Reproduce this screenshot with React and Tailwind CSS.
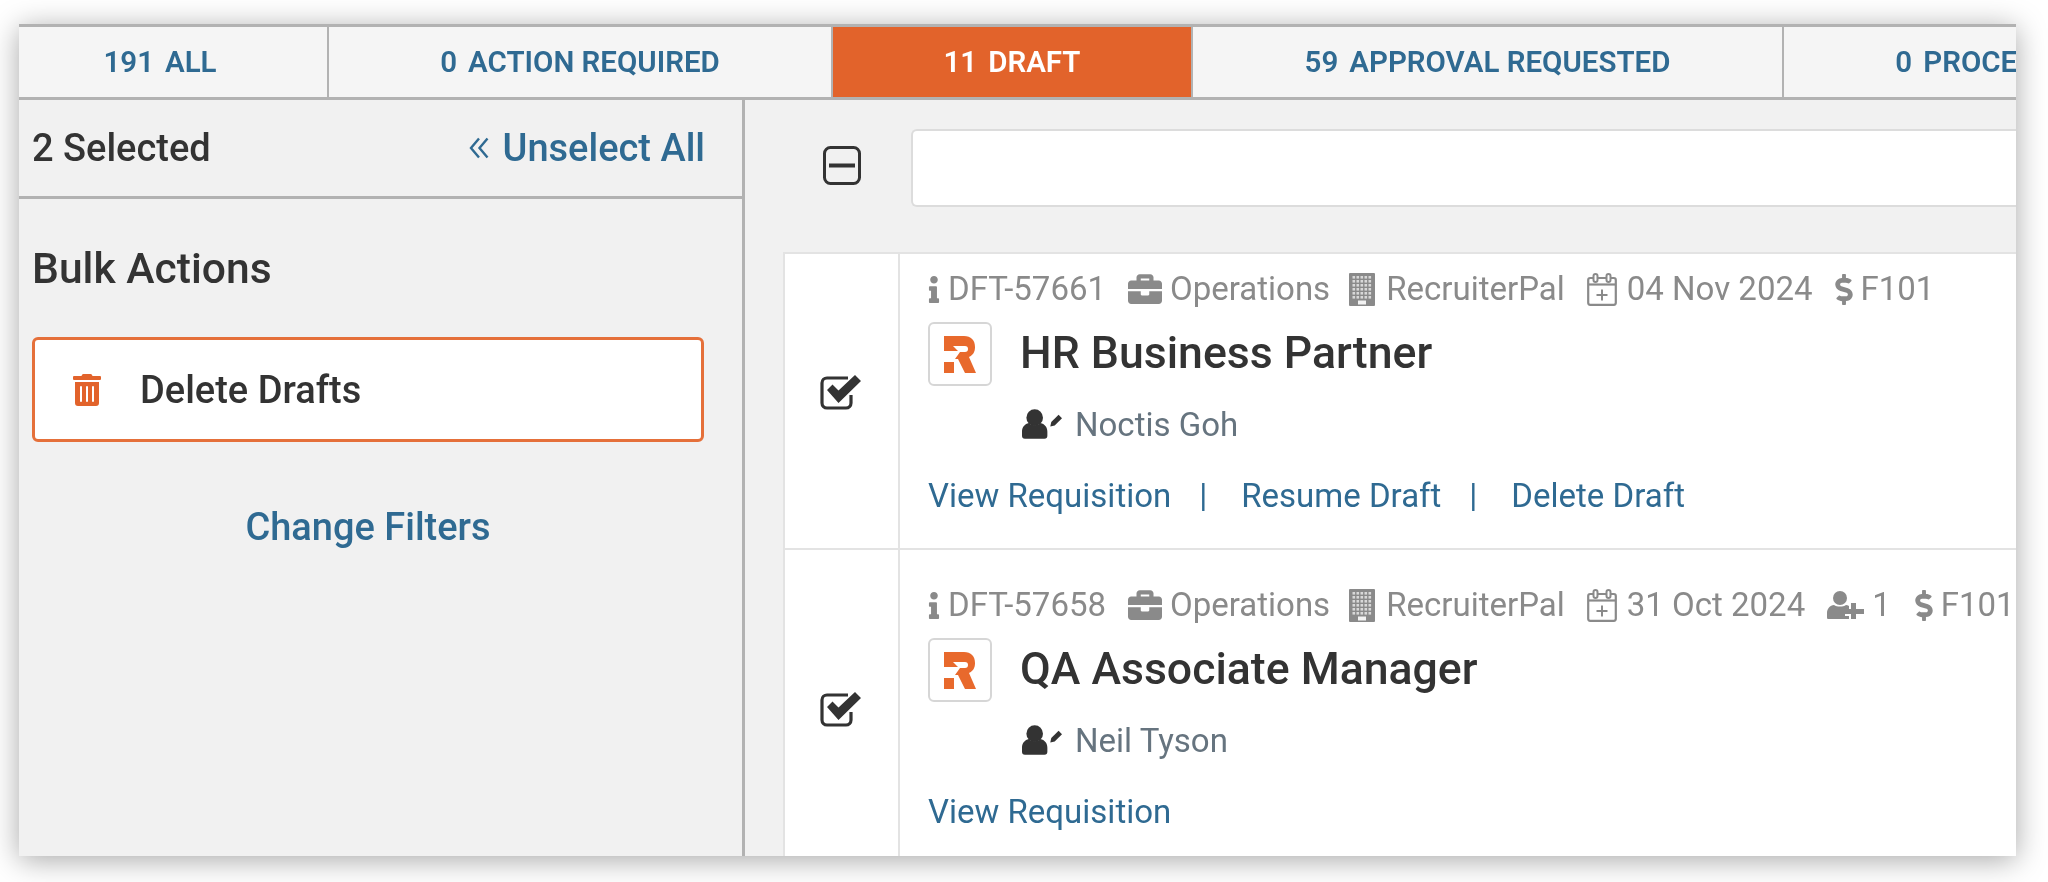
import { FaInfo, FaBriefcase, FaDollarSign, FaTrashAlt } from "react-icons/fa";

const tabs = [
    { count: 191, label: "ALL", width: "w-[310px]", inset: "pr-[26px]" },
    { count: 0, label: "ACTION REQUIRED", width: "w-[504px]" },
    { count: 11, label: "DRAFT", width: "w-[360px]", active: true },
    { count: 59, label: "APPROVAL REQUESTED", width: "w-[591px]" },
    { count: 0, label: "PROCESSING", width: "w-[432px]" },
];

function CheckedBox() {
    return (
        <svg viewBox="0 0 41 35" className="w-[41px] h-[35px]" fill="none">
            <path d="M31 20v8a5 5 0 0 1-5 5H7a5 5 0 0 1-5-5V8a5 5 0 0 1 5-5h21" stroke="#333" strokeWidth="3.2" />
            <path d="M7 15l5.5-5.5 6 6L35 0l6 6-22.500 22z" fill="#333" />
        </svg>
    );
}

function MinusBox() {
    return (
        <svg viewBox="0 0 38 39" className="w-[38px] h-[39px] mt-[17px] shrink-0" fill="none">
            <rect x="1.500" y="1.500" width="35" height="36" rx="6" stroke="#333" strokeWidth="3" />
            <rect x="6" y="17.500" width="26" height="4" fill="#333" />
        </svg>
    );
}

// 5 x 6 window grid, like the old font-awesome building glyph
const windows = [];
for (let row = 0; row < 6; row++) {
    for (let col = 0; col < 5; col++) {
        windows.push([3.5 + col * 4, 3 + row * 4]);
    }
}

function Building() {
    return (
        <svg viewBox="0 0 26 33" className="w-[26px] h-[33px] shrink-0">
            <rect width="26" height="33" rx="1" fill="#8a8a8a" />
            {windows.map(([x, y]) => (
                <rect key={`${x}-${y}`} x={x} y={y} width="2.600" height="2.600" fill="#d8d8d8" />
            ))}
            <rect x="9" y="27.500" width="8" height="4" fill="#f2f2f2" />
        </svg>
    );
}

function CalendarPlus() {
    return (
        <svg viewBox="0 0 30 33" className="w-[30px] h-[33px] shrink-0" fill="none" stroke="#8a8a8a">
            <rect x="1.200" y="5" width="27.600" height="26.800" rx="2" strokeWidth="2.200" />
            <path d="M1 11.500h28" strokeWidth="2.200" />
            <rect x="6.500" y="1" width="4" height="8" rx="2" fill="#fff" strokeWidth="2" />
            <rect x="19.500" y="1" width="4" height="8" rx="2" fill="#fff" strokeWidth="2" />
            <path d="M15 16.500v11M9.500 22h11" strokeWidth="2" />
        </svg>
    );
}

function UserPlus() {
    return (
        <svg viewBox="0 0 37 28" className="w-[37px] h-[28px] shrink-0" fill="#8a8a8a">
            <circle cx="13" cy="7" r="7" />
            <path d="M1 28c-1 0-1-1-1-2v-4c0-4 3-8 7-8 3 2 9 2 12 0 1 0 2 .5 3 1v3h-4v7h4v3z" />
            <path d="M24 12h5v6h8v5h-8v5h-5v-5h-7v-5h7z" />
        </svg>
    );
}

function OwnerIcon() {
    return (
        <svg viewBox="0 0 41 30" className="w-[40px] h-[30px] shrink-0" fill="#333">
            <circle cx="13" cy="8.500" r="8.500" />
            <path d="M3 30c-2 0-3-1-3-3v-4c0-5 3-8 7-9 3 3 9 3 12 0 4 1 7 4 7 9v4c0 2-1 3-3 3z" />
            <path d="M30 13l7.500-7.500 3.500 3.500-7.500 7.500-4.500 1z" />
        </svg>
    );
}

function Logo() {
    return (
        <div className="w-[64px] h-[64px] shrink-0 rounded-md border-2 border-[#d6d6d6] bg-white flex items-center justify-center">
            <svg viewBox="0 0 32 37" className="w-[32px] h-[37px]" fill="#e8692c">
                <path d="M0 0h20c7 0 11 4 11 11 0 5-2 8-6 10l7 16H21l-7-14h-3l5-7h5c2 0 3-1 3-3s-1-3-3-3H9l5 5H0z" />
                <path d="M0 26h10v11H0z" />
            </svg>
        </div>
    );
}

function Meta({ icon, children, gap = "gap-[8px]", className = "" }) {
    return (
        <span className={`flex items-center ${gap} ${className}`}>
            {icon}
            <span>{children}</span>
        </span>
    );
}

function RequisitionCard({ id, date, title, owner, referrals, actions, className = "", bodyClass = "", checkClass = "" }) {
    return (
        <div className={`flex bg-white border-l-2 border-[#e3e3e3] ${className}`}>
            <div className={`w-[115px] shrink-0 flex items-center justify-center border-r-2 border-[#e3e3e3] pr-[3px] ${checkClass}`}>
                <CheckedBox />
            </div>
            <div className={`flex-1 pl-[28px] min-w-0 ${bodyClass}`}>
                <div className="flex items-center h-[36px] text-[#8a8a8a] text-[33px] leading-[36px] whitespace-nowrap">
                    <Meta icon={<FaInfo className="w-[12px] h-[27px]" />} className="mr-[22px]">{id}</Meta>
                    <Meta icon={<FaBriefcase className="w-[34px] h-[34px]" />} className="mr-[19px]">Operations</Meta>
                    <Meta icon={<Building />} gap="gap-[11px]" className="mr-[22px]">RecruiterPal</Meta>
                    <Meta icon={<CalendarPlus />} gap="gap-[10px]" className="mr-[22px]">{date}</Meta>
                    {referrals && <Meta icon={<UserPlus />} className="mr-[24px]">{referrals}</Meta>}
                    <Meta icon={<FaDollarSign className="w-[18px] h-[31px]" />}>F101</Meta>
                </div>
                <div className="flex items-center gap-[28px] mt-[15px] h-[64px]">
                    <Logo />
                    <h2 className="text-[#333] text-[44.600px] font-medium leading-none -mt-[1px]">{title}</h2>
                </div>
                <div className="flex items-center gap-[13px] ml-[94px] mt-[20px] h-[36px]">
                    <OwnerIcon />
                    <span className="text-[#66747f] text-[33px] leading-none">{owner}</span>
                </div>
                <div className="flex items-center mt-[37px] text-[#2f6a92] text-[33px] leading-none whitespace-nowrap">
                    {actions.map((action, i) => (
                        <span key={action} className="flex items-center">
                            {i > 0 && <span className="w-[70px] pl-[28px] text-left">|</span>}
                            {action}
                        </span>
                    ))}
                </div>
            </div>
        </div>
    );
}

export default function App() {
    return (
        <div className="w-[2048px] h-[882px] bg-white pl-[19px] pt-[24px] overflow-hidden font-['Roboto',sans-serif]">
            <div className="w-[1997px] h-[832px] flex flex-col overflow-hidden bg-[#f1f1f1] shadow-[0_4px_28px_rgba(0,0,0,0.35)] blur-[0.5px]">
                {/* Status tabs */}
                <div className="flex shrink-0 h-[76px] border-t-[3px] border-b-[3px] border-[#b2b2b2] bg-[#f5f5f5] whitespace-nowrap">
                    {tabs.map((tab) => (
                        <div
                            key={tab.label}
                            className={`${tab.width} ${tab.inset || ""} shrink-0 flex items-center justify-center gap-[11px] border-r-2 border-[#b2b2b2] text-[29.500px] font-semibold ${tab.active ? "bg-[#e2632b] text-white" : "text-[#2f6a92]"}`}
                        >
                            <span>{tab.count}</span>
                            <span>{tab.label}</span>
                        </div>
                    ))}
                </div>

                <div className="flex flex-1 min-h-0">
                    {/* Bulk actions sidebar */}
                    <div className="w-[726px] shrink-0 border-r-[3px] border-[#b2b2b2] text-[#333]">
                        <div className="h-[99px] flex items-center justify-between pl-[13px] pr-[37px] border-b-[3px] border-[#b2b2b2] font-medium text-[38px]">
                            <span>2 Selected</span>
                            <span className="flex items-center gap-[14px] text-[#2f6a92]">
                                <svg viewBox="0 0 20 22" className="w-[20px] h-[22px]" fill="none" stroke="#2f6a92" strokeWidth="2.400">
                                    <path d="M10 1.500L2 11l8 9.500M18.500 1.500L10.500 11l8 9.500" />
                                </svg>
                                Unselect All
                            </span>
                        </div>
                        <h3 className="pl-[13px] mt-[44px] text-[42.600px] font-medium leading-[50px]">Bulk Actions</h3>
                        <button className="flex items-center ml-[13px] mt-[44px] w-[672px] h-[105px] bg-white border-[3px] border-[#e5703a] rounded-md pl-[38px] gap-[39px] text-[38px] font-medium">
                            <FaTrashAlt className="w-[28px] h-[32px] text-[#e2632b]" />
                            <span className="pt-[2px]">Delete Drafts</span>
                        </button>
                        <div className="mt-[57px] w-[672px] ml-[13px] text-center text-[38px] font-medium text-[#2f6a92]">Change Filters</div>
                    </div>

                    {/* Requisition list */}
                    <div className="flex-1 min-w-0 flex flex-col pl-[38px]">
                        <div className="flex items-start h-[152px] shrink-0 -ml-[38px] pl-[78px] pt-[29px]">
                            <MinusBox />
                            <div className="ml-[50px] flex-1 h-[78px] bg-white border-2 border-r-0 border-[#dcdcdc] rounded-l-md" />
                        </div>
                        <div className="flex flex-col border-t-2 border-[#e3e3e3]">
                            <RequisitionCard
                                id="DFT-57661"
                                date="04 Nov 2024"
                                title="HR Business Partner"
                                owner="Noctis Goh"
                                actions={["View Requisition", "Resume Draft", "Delete Draft"]}
                                className="h-[296px] border-b-2 border-b-[#e3e3e3]"
                                bodyClass="pt-[17px]"
                                checkClass="pb-[18px]"
                            />
                            <RequisitionCard
                                id="DFT-57658"
                                date="31 Oct 2024"
                                title="QA Associate Manager"
                                owner="Neil Tyson"
                                referrals="1"
                                actions={["View Requisition"]}
                                className="h-[320px]"
                                bodyClass="pt-[37px]"
                                checkClass="pb-[2px]"
                            />
                        </div>
                    </div>
                </div>
            </div>
        </div>
    );
}
